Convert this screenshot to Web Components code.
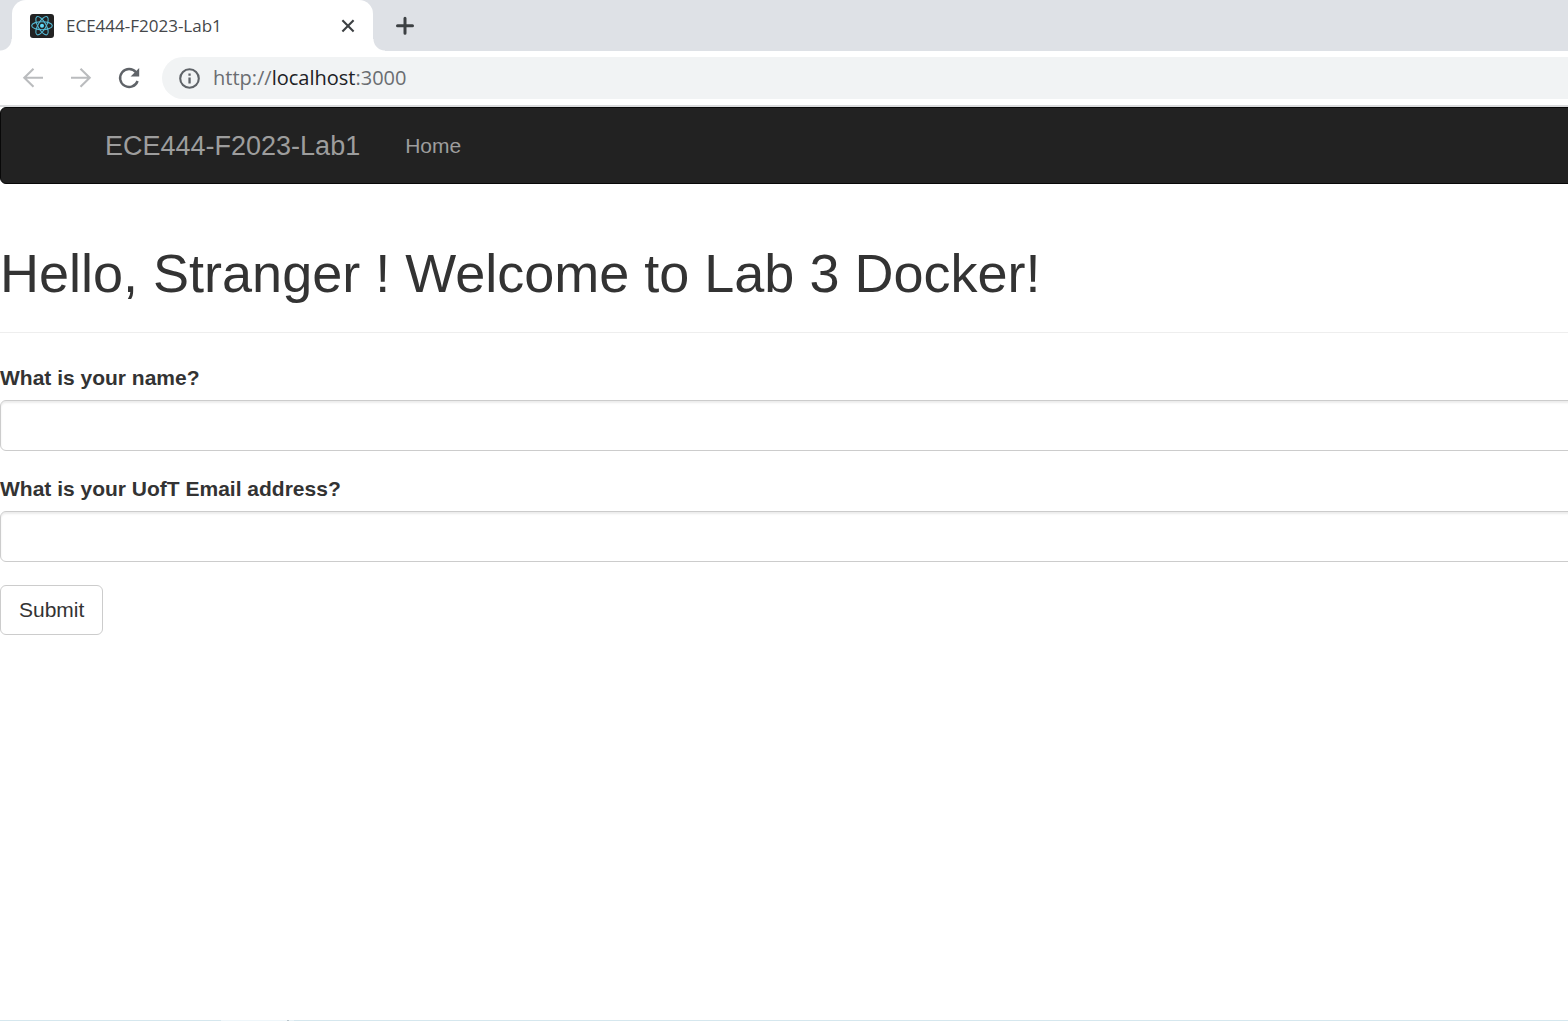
<!DOCTYPE html>
<html lang="en">
<head>
<meta charset="utf-8">
<title>ECE444-F2023-Lab1</title>
<style>
html { overflow-x: hidden; }
body { margin: 0; min-height: 100vh; display: flex; flex-direction: column; overflow-x: hidden; background: #fff; color: #333; font: 21px/30px "Liberation Sans", Arial, sans-serif; }
</style>
</head>
<body>
<browser-tabs><browser-tab>ECE444-F2023-Lab1</browser-tab></browser-tabs>
<browser-toolbar></browser-toolbar>
<site-nav><span slot="brand">ECE444-F2023-Lab1</span><span slot="link">Home</span></site-nav>
<page-content>
  <page-heading slot="heading">Hello, Stranger ! Welcome to Lab 3 Docker!</page-heading>
  <text-field name="name" label="What is your name?"></text-field>
  <text-field name="email" label="What is your UofT Email address?"></text-field>
  <submit-button>Submit</submit-button>
</page-content>
<window-edge></window-edge>
<script>
const define = (name, html, setup) => {
  const template = document.createElement('template');
  template.innerHTML = html;
  customElements.define(name, class extends HTMLElement {
    constructor() {
      super();
      this.attachShadow({ mode: 'open' }).append(template.content.cloneNode(true));
    }
    connectedCallback() { if (setup) setup(this, this.shadowRoot); }
  });
};

define('browser-tabs', `
<style>
:host { display: flex; height: 51px; padding-left: 12px; background: #dee1e6; font: 17px/24px "Open Sans", sans-serif; }
button { display: flex; align-items: center; justify-content: center; width: 40px; margin-left: 12px; padding: 0; border: 0; background: none; }
</style>
<slot></slot>
<button type="button" aria-label="New tab"><svg width="20" height="20" viewBox="0 0 20 20" fill="none" stroke="#3c4043" stroke-width="3" stroke-linecap="round"><path d="M10 2.2v15M2.5 9.7h15"/></svg></button>`);

define('browser-tab', `
<style>
:host { position: relative; display: flex; align-items: center; box-sizing: border-box; width: 361px; padding: 0 16px 0 18px; border-radius: 14px 14px 0 0; background: #fff; color: #45474a; }
:host::before, :host::after { content: ""; position: absolute; bottom: 0; width: 12px; height: 12px; }
:host::before { right: 100%; background: radial-gradient(circle at 0 0, transparent 11px, #fff 12px); }
:host::after { left: 100%; background: radial-gradient(circle at 100% 0, transparent 11px, #fff 12px); }
.icon { margin-right: 12px; }
.title { flex: 1; white-space: nowrap; }
button { display: flex; padding: 0; border: 0; background: none; }
</style>
<svg class="icon" width="24" height="24" viewBox="0 0 24 24" fill="none" stroke="#53b9d4" stroke-width="1.1"><rect width="24" height="24" rx="3" fill="#222" stroke="none"/><g><ellipse cx="12" cy="11.7" rx="10.3" ry="4"/><ellipse cx="12" cy="11.7" rx="10.3" ry="4" transform="rotate(60 12 11.7)"/><ellipse cx="12" cy="11.7" rx="10.3" ry="4" transform="rotate(120 12 11.7)"/></g><circle cx="12" cy="11.7" r="2" fill="#61dafb" stroke="none"/></svg>
<span class="title"><slot></slot></span>
<button type="button" aria-label="Close tab"><svg width="18" height="18" viewBox="0 0 18 18" fill="none" stroke="#3c4043" stroke-width="2.1"><path d="M3.4 3.2l11.2 11.2M14.6 3.2L3.4 14.4"/></svg></button>`);

define('browser-toolbar', `
<style>
:host { display: flex; align-items: center; height: 54px; padding-left: 18px; border-bottom: 2px solid #d9dadc; background: #fff; font: 20px/28px "Open Sans", sans-serif; }
button { display: flex; padding: 0; margin-right: 18px; border: 0; background: none; }
.address { display: flex; align-items: center; flex: 1; height: 42px; padding-left: 16px; border-radius: 21px 0 0 21px; background: #f1f3f4; color: #6a6d71; }
.address svg { margin-right: 12px; }
b { font-weight: 400; color: #202124; }
</style>
<button type="button" aria-label="Back"><svg width="30" height="30" viewBox="0 0 30 30" fill="none" stroke="#babcbe" stroke-width="2.1"><path d="M25 14.7H6.5M15.5 5.7L6.3 14.7l9.2 9"/></svg></button>
<button type="button" aria-label="Forward"><svg width="30" height="30" viewBox="0 0 30 30" fill="none" stroke="#babcbe" stroke-width="2.1"><path d="M5 14.7h18.5M14.5 5.7l9.2 9-9.2 9"/></svg></button>
<button type="button" aria-label="Reload"><svg width="30" height="30" viewBox="0 0 30 30"><path d="M22 9.2A9 9 0 1 0 23.6 18" fill="none" stroke="#5f6368" stroke-width="2.4"/><path d="M25.2 5v8.6H16.6z" fill="#5f6368"/></svg></button>
<div class="address"><svg width="23" height="23" viewBox="0 0 23 23"><circle cx="11.5" cy="11.5" r="9.3" fill="none" stroke="#5f6368" stroke-width="2.1"/><path d="M10.4 6.6h2.3v2.2h-2.3zM10.4 10.4h2.3v6h-2.3z" fill="#5f6368"/></svg><span>http://<b>localhost</b>:3000</span></div>`);

define('site-nav', `
<style>
:host { display: block; margin-right: -8px; border: 1px solid #080808; border-radius: 6px; background: #222; }
nav { display: flex; align-items: center; gap: 45px; height: 75px; padding-left: 104px; }
a { color: #9d9d9d; text-decoration: none; }
.brand { font-size: 27px; }
</style>
<nav><a class="brand" href="#"><slot name="brand"></slot></a><a href="#"><slot name="link"></slot></a></nav>`);

define('page-heading', `
<style>
:host { display: block; margin: 60px 0 30px; padding-bottom: 29px; border-bottom: 1px solid #eee; }
h1 { margin: 0; font-size: 54px; line-height: 59px; font-weight: 400; }
</style>
<h1><slot></slot></h1>`);

define('page-content', `
<style>
:host { display: block; flex: 1; margin-right: -8px; }
form { display: flex; flex-direction: column; align-items: stretch; gap: 23px; }
</style>
<slot name="heading"></slot>
<form><slot></slot></form>`);

define('text-field', `
<style>
:host { display: block; }
label { display: block; margin-bottom: 7px; font-weight: 700; }
input { display: block; box-sizing: border-box; width: 100%; height: 51px; padding: 9px 18px; border: 1px solid #ccc; border-radius: 6px; background: #fff; color: #555; font: inherit; box-shadow: inset 0 2px 2px rgba(0,0,0,.075); outline: 0; }
</style>
<label for="field"></label><input id="field" type="text">`, (host, root) => {
  root.querySelector('label').textContent = host.getAttribute('label');
  root.querySelector('input').name = host.getAttribute('name');
});

define('submit-button', `
<style>
:host { display: flex; }
button { height: 50px; padding: 0 18px; border: 1px solid #ccc; border-radius: 6px; background: #fff; color: #333; font: inherit; }
</style>
<button type="submit"><slot></slot></button>`);

define('window-edge', `
<style>
:host { display: block; height: 1px; background: linear-gradient(90deg, transparent 221px, #eef6fa 221px 287px, #b9c5cb 287px 289px, #e6f1f6 289px 294px, transparent 294px), #d5e7ee; }
</style>`);
</script>
</body>
</html>
